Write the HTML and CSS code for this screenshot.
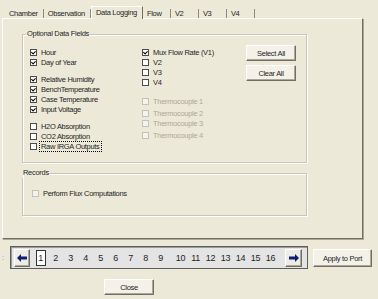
FILE: index.html
```html
<!DOCTYPE html>
<html lang="en">
<head>
    <meta charset="UTF-8">
    <title>Data Logging</title>
    <link rel="stylesheet" href="styles.css">
</head>
<body>
    <div class="tabs">
        <div class="tab first">Chamber</div>
        <div class="tab">Observation</div>
        <div class="tab active">Data Logging</div>
        <div class="tab">Flow</div>
        <div class="tab">V2</div>
        <div class="tab">V3</div>
        <div class="tab">V4</div>
    </div>

    <div class="panel">
        <fieldset class="group fields">
            <legend>Optional Data Fields</legend>
            <div class="col left-col">
                <div class="row"><span class="box checked"></span>Hour</div>
                <div class="row"><span class="box checked"></span>Day of Year</div>
                <div class="row gap"><span class="box checked"></span>Relative Humidity</div>
                <div class="row"><span class="box checked"></span>BenchTemperature</div>
                <div class="row"><span class="box checked"></span>Case Temperature</div>
                <div class="row"><span class="box checked"></span>Input Voltage</div>
                <div class="row gap"><span class="box"></span>H2O Absorption</div>
                <div class="row"><span class="box"></span>CO2 Absorption</div>
                <div class="row"><span class="box"></span><span class="focus">Raw IRGA Outputs</span></div>
            </div>
            <div class="col right-col">
                <div class="row"><span class="box checked"></span>Mux Flow Rate (V1)</div>
                <div class="row"><span class="box"></span>V2</div>
                <div class="row"><span class="box"></span>V3</div>
                <div class="row"><span class="box"></span>V4</div>
                <div class="row disabled t1"><span class="box"></span>Thermocouple 1</div>
                <div class="row disabled t2"><span class="box"></span>Thermocouple 2</div>
                <div class="row disabled"><span class="box"></span>Thermocouple 3</div>
                <div class="row disabled t2"><span class="box"></span>Thermocouple 4</div>
            </div>
            <div class="col btn-col">
                <button class="btn">Select All</button>
                <button class="btn">Clear All</button>
            </div>
        </fieldset>

        <fieldset class="group records">
            <legend>Records</legend>
            <div class="row"><span class="box off"></span>Perform Flux Computations</div>
        </fieldset>
    </div>

    <div class="navrow">
        <span class="grip">:</span>
        <div class="pager">
            <button class="arrow">
                <svg width="10" height="8" viewBox="0 0 10 8"><path d="M0 4 L4 0 L4 2.5 L10 2.5 L10 5.5 L4 5.5 L4 8 Z" fill="#0c1f78"/></svg>
            </button>
            <span class="num first-num"><span class="current">1</span></span>
            <span class="num">2</span>
            <span class="num">3</span>
            <span class="num">4</span>
            <span class="num">5</span>
            <span class="num">6</span>
            <span class="num">7</span>
            <span class="num">8</span>
            <span class="num">9</span>
            <span class="num wide">10</span>
            <span class="num">11</span>
            <span class="num">12</span>
            <span class="num">13</span>
            <span class="num">14</span>
            <span class="num">15</span>
            <span class="num">16</span>
            <button class="arrow next">
                <svg width="10" height="8" viewBox="0 0 10 8"><path d="M10 4 L6 0 L6 2.5 L0 2.5 L0 5.5 L6 5.5 L6 8 Z" fill="#0c1f78"/></svg>
            </button>
        </div>
        <button class="btn apply">Apply to Port</button>
    </div>

    <div class="closerow">
        <button class="btn close">Close</button>
    </div>
</body>
</html>
```

FILE: styles.css
```css
/* XP style dialog */
body {
    margin: 0;
    width: 378px;
    height: 299px;
    overflow: hidden;
    background: #ECE9D8;
    color: #1e1e1e;
    font-family: "Liberation Sans", Arial, sans-serif;
    font-size: 7.5px;
    letter-spacing: -0.3px;
}

.tabs {
    display: flex;
    align-items: flex-end;
    height: 12px;
    padding: 6px 0 0 3px;
    position: relative;
    z-index: 1;
}

.tab {
    min-width: 18px;
    height: 9px;
    line-height: 9px;
    padding: 0 5px 0 4px;
    border-right: 1px solid #8d8b80;
    white-space: nowrap;
}

.tab.first {
    padding-left: 6px;
}

.tab.active {
    height: 12px;
    line-height: 11px;
    margin-bottom: -1px;
    background: #ECE9D8;
    border-left: 1px solid #fff;
    border-top: 1px solid #fff;
    border-right: 1px solid #716F64;
}

.panel {
    margin-left: 2px;
    width: 361px;
    height: 221px;
    box-sizing: border-box;
    padding: 10px 0 0 19px;
    border-top: 1px solid #fff;
    border-left: 1px solid #fff;
    border-right: 1px solid #716F64;
    border-bottom: 1px solid #716F64;
    box-shadow: 1px 1px 0 #ACA899;
}

.group {
    margin: 0;
    width: 285px;
    box-sizing: border-box;
    border: 1px solid #c9c6b6;
    box-shadow: inset 1px 1px 0 #fff, 1px 1px 0 #fff;
}

.group legend {
    padding: 0 1px;
    line-height: 10px;
}

.fields {
    display: flex;
    align-items: flex-start;
    height: 134px;
    padding: 6px 0 0 7px;
}

.fields legend {
    margin-left: -4px;
}

.records {
    margin-top: 5px;
    height: 48px;
    padding: 10px 0 0 9px;
}

.records legend {
    margin-left: -10px;
}

.col {
    display: flex;
    flex-direction: column;
}

.left-col,
.right-col {
    padding-top: 2px;
}

.left-col {
    width: 112px;
}

.right-col {
    width: 104px;
}

.row {
    display: flex;
    align-items: center;
    height: 10px;
    white-space: nowrap;
}

.row.gap {
    margin-top: 7px;
}

.row.t1 {
    margin-top: 9px;
}

.row.t2 {
    margin-top: 2px;
}

.row.disabled {
    color: #ACA899;
}

.box {
    flex: none;
    width: 5px;
    height: 5px;
    margin-right: 4px;
    border: 1px solid #4d4d4d;
    background: #fff;
    position: relative;
}

.box.checked::after {
    content: "";
    position: absolute;
    left: 0;
    top: 0;
    width: 3px;
    height: 1.5px;
    border-left: 1.3px solid #000;
    border-bottom: 1.3px solid #000;
    transform: translate(0.3px, 0.6px) rotate(-45deg);
}

.disabled .box,
.box.off {
    border-color: #c4c2b4;
    background: #f4f3ee;
}

.focus {
    outline: 1px dotted #000;
    padding: 0 1px;
    margin-left: -1px;
}

.btn {
    font-family: inherit;
    font-size: 7.5px;
    letter-spacing: -0.3px;
    color: #1e1e1e;
    padding: 0;
    margin: 0;
    background: #F3F1E8;
    border: 1px solid;
    border-color: #fff #716F64 #716F64 #fff;
    box-shadow: inset -1px -1px 0 #ACA899;
    border-radius: 1px;
}

.btn-col .btn {
    width: 50px;
    height: 16px;
    margin-bottom: 4px;
}

.navrow {
    display: flex;
    align-items: flex-start;
    margin-top: 7px;
    padding-left: 2px;
}

.grip {
    width: 8px;
    color: #9a988c;
    font-size: 8px;
    line-height: 23px;
}

.pager {
    display: flex;
    align-items: center;
    width: 298px;
    height: 23px;
    box-sizing: border-box;
    padding: 0 0 0 3px;
    background: #e4e4e4;
    border: 1px solid #5d5d5d;
    box-shadow: inset 1px 1px 0 #9b9b9b;
    font-size: 9px;
}

.arrow {
    width: 16px;
    height: 18px;
    padding: 0;
    display: flex;
    align-items: center;
    justify-content: center;
    background: #EFEDE3;
    border: 1px solid;
    border-color: #fff #716F64 #716F64 #fff;
    box-shadow: inset -1px -1px 0 #ACA899;
}

.arrow.next {
    margin-left: 7px;
    width: 17px;
}

.num {
    width: 15px;
    text-align: center;
}

.first-num {
    margin-left: 3px;
}

.num.wide {
    margin-left: 5px;
}

.current {
    display: inline-block;
    width: 8px;
    height: 14px;
    line-height: 14px;
    background: #fff;
    border: 1px solid #333;
}

.apply {
    width: 59px;
    height: 18px;
    margin: 3px 0 0 5px;
}

.closerow {
    padding: 10px 0 0 104px;
}

.close {
    width: 50px;
    height: 16px;
}
```
